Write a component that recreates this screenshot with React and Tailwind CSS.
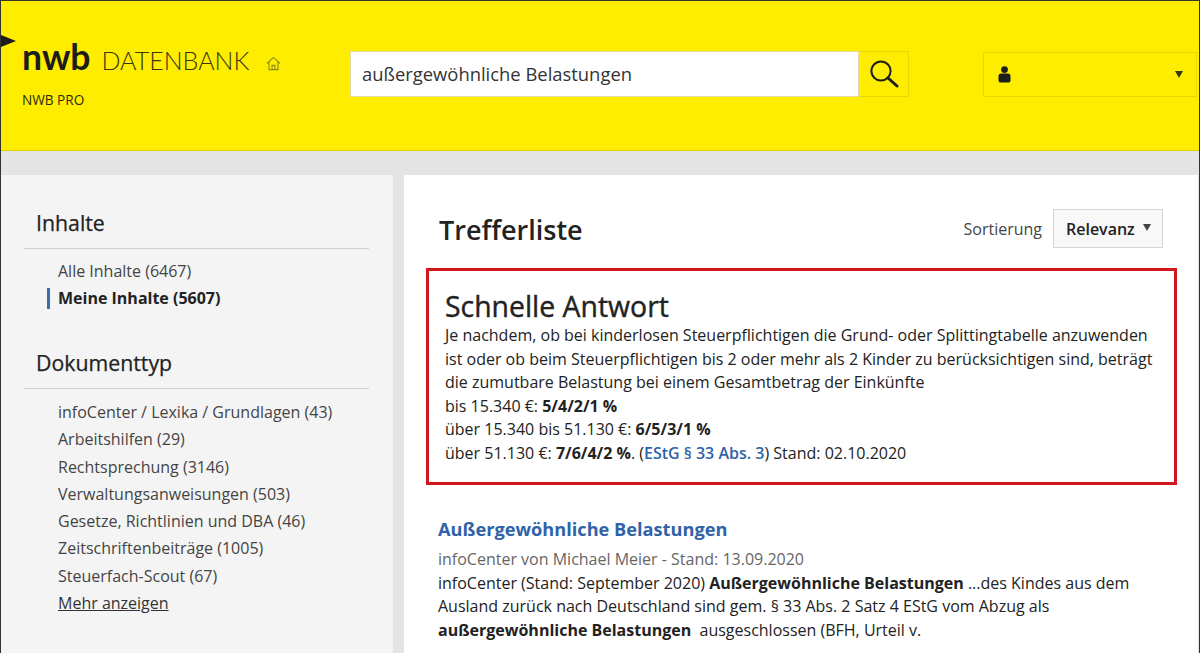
import React from 'react';

const inhalte = [
  { label: 'Alle Inhalte (6467)' },
  { label: 'Meine Inhalte (5607)', active: true },
];

const dokumenttypen = [
  'infoCenter / Lexika / Grundlagen (43)',
  'Arbeitshilfen (29)',
  'Rechtsprechung (3146)',
  'Verwaltungsanweisungen (503)',
  'Gesetze, Richtlinien und DBA (46)',
  'Zeitschriftenbeiträge (1005)',
  'Steuerfach-Scout (67)',
];

const HomeIcon = () => (
  <svg width="15" height="15" viewBox="0 0 16 16" fill="none" stroke="#8f8a10" strokeWidth="1.2">
    <path d="M1 8 L8 1.5 L15 8" />
    <path d="M3.2 6.5 V14.5 H12.8 V6.5" />
    <path d="M6.5 14.5 V10 H9.5 V14.5" />
  </svg>
);

const SearchIcon = () => (
  <svg width="30" height="30" viewBox="0 0 30 30" fill="none" stroke="#1d1d1b">
    <circle cx="12" cy="12" r="9.6" strokeWidth="2" />
    <path d="M19 19 L28 27" strokeWidth="3" strokeLinecap="round" />
  </svg>
);

const UserIcon = () => (
  <svg width="13" height="17" viewBox="0 0 13 17" fill="#1d1d1b">
    <circle cx="6.5" cy="3.6" r="3.4" />
    <path d="M0.5 10 Q0.5 7.5 3 7.5 H10 Q12.5 7.5 12.5 10 V14.5 Q12.5 16.5 10.5 16.5 H2.5 Q0.5 16.5 0.5 14.5 Z" />
  </svg>
);

const Header = () => (
  <header className="relative h-[150px] shrink-0 bg-[#ffed00] border-b border-[#e3d400] flex items-start">
    {/* kleiner Pfeil am linken Rand */}
    <div className="absolute left-0 top-[34px] w-0 h-0 border-y-[6px] border-y-transparent border-l-[15px] border-l-[#1d1d1b]" />
    <div className="w-[349px] pl-[21px] pt-[38px] shrink-0">
      <div className="flex items-baseline h-[36px]">
        <span className="text-[35.5px] leading-[36px] font-bold text-[#1d1d1b] font-['Lato',sans-serif]">nwb</span>
        <span className="ml-[11px] text-[25px] leading-[36px] font-light text-[#3a3710] font-['Lato',sans-serif]">DATENBANK</span>
        <span className="ml-[17px] self-center mt-[13px]"><HomeIcon /></span>
      </div>
      <div className="mt-[16px] text-[13.6px] leading-[18px] text-[#2b2a10]">NWB PRO</div>
    </div>
    <div className="flex mt-[50px] h-[46px]">
      <div className="w-[509px] bg-white border border-[#e0d9a0] pl-[11px] flex items-center text-[18.4px] text-[#333]">
        außergewöhnliche Belastungen
      </div>
      <div className="w-[50px] border border-l-0 border-[#e8d800] flex items-center justify-center">
        <SearchIcon />
      </div>
    </div>
    <div className="ml-[74px] mt-[51px] w-[214px] h-[45px] border border-[#e8d800] flex items-center justify-between pl-[14px] pr-[13px]">
      <UserIcon />
      <span className="w-0 h-0 border-x-[4px] border-x-transparent border-t-[7px] border-t-[#3a3710]" />
    </div>
  </header>
);

const SideSection = ({ title, children }) => (
  <section>
    <h2 className="text-[21.3px] leading-[28px] text-[#222] px-[12px] pb-[11px] border-b border-[#d0d0d0] font-normal [-webkit-text-stroke:0.25px_#222]">{title}</h2>
    <ul className="pt-[9px] pl-[34px]">{children}</ul>
  </section>
);

const Sidebar = () => (
  <aside className="w-[392px] shrink-0 bg-[#f4f4f4] pt-[34px] pl-[23px] pr-[24px]">
    <SideSection title="Inhalte">
      {inhalte.map((item) => (
        <li key={item.label} className={`relative text-[16px] leading-[27px] ${item.active ? 'font-bold text-[#222]' : 'text-[#444]'}`}>
          {item.active && <span className="absolute left-[-11px] top-[3px] w-[3px] h-[21px] bg-[#3a6ea8]" />}
          {item.label}
        </li>
      ))}
    </SideSection>
    <div className="h-[37px]" />
    <SideSection title="Dokumenttyp">
      <li className="h-px list-none" />
      {dokumenttypen.map((label) => (
        <li key={label} className="text-[16px] leading-[27.3px] text-[#444]">{label}</li>
      ))}
      <li className="text-[16px] leading-[27px] text-[#333] underline">Mehr anzeigen</li>
    </SideSection>
  </aside>
);

const Main = () => (
  <main className="flex-1 bg-white pl-[22px] pr-[21px] pt-[34px] min-w-0">
    <div className="flex items-center justify-between h-[42px] pl-[13px] pr-[14px]">
      <h1 className="text-[27px] leading-[42px] font-semibold text-[#222]">Trefferliste</h1>
      <div className="flex items-center mb-[3px]">
        <span className="text-[16px] text-[#444] mr-[11px] mt-[1px]">Sortierung</span>
        <div className="w-[110px] h-[39px] bg-[#f8f8f8] border border-[#d5d5d5] flex items-center pl-[12px] text-[16px] font-semibold text-[#222]">
          Relevanz
          <span className="ml-[8px] mb-[3px] w-0 h-0 border-x-[4px] border-x-transparent border-t-[7px] border-t-[#444]" />
        </div>
      </div>
    </div>
    <div className="mt-[17px] border-[3px] border-[#d2161e] h-[217px] pl-[16px] pt-[17px] pr-[8px]">
      <h2 className="text-[28.4px] leading-[36px] font-normal text-[#222] [-webkit-text-stroke:0.4px_#222]">Schnelle Antwort</h2>
      <div className="text-[16px] leading-[23.6px] text-[#222]">
        <p>Je nachdem, ob bei kinderlosen Steuerpflichtigen die Grund- oder Splittingtabelle anzuwenden</p>
        <p>ist oder ob beim Steuerpflichtigen bis 2 oder mehr als 2 Kinder zu berücksichtigen sind, beträgt</p>
        <p>die zumutbare Belastung bei einem Gesamtbetrag der Einkünfte</p>
        <p>bis 15.340 €: <b>5/4/2/1 %</b></p>
        <p>über 15.340 bis 51.130 €: <b>6/5/3/1 %</b></p>
        <p>über 51.130 €: <b>7/6/4/2 %</b>. (<span className="text-[#2f62a8] font-semibold">EStG § 33 Abs. 3</span>) Stand: 02.10.2020</p>
      </div>
    </div>
    <div className="mt-[30px] pl-[12px]">
      <h3 className="text-[18.2px] leading-[28px] font-bold text-[#2f62a8]">Außergewöhnliche Belastungen</h3>
      <p className="mt-[5px] text-[16px] leading-[23.5px] text-[#666]">infoCenter von Michael Meier - Stand: 13.09.2020</p>
      <div className="text-[16px] leading-[23.5px] text-[#222]">
        <p>infoCenter (Stand: September 2020) <b>Außergewöhnliche Belastungen</b> ...des Kindes aus dem</p>
        <p>Ausland zurück nach Deutschland sind gem. § 33 Abs. 2 Satz 4 EStG vom Abzug als</p>
        <p><b>außergewöhnliche Belastungen</b>&nbsp; ausgeschlossen (BFH, Urteil v.</p>
      </div>
    </div>
  </main>
);

const App = () => (
  <div className="h-[653px] w-[1200px] overflow-hidden flex flex-col bg-[#e4e4e4] border-x border-t border-[#333] font-['Open_Sans',sans-serif]">
    <Header />
    <div className="flex gap-[11px] mt-[24px] flex-1 min-h-0 pr-[1px]">
      <Sidebar />
      <Main />
    </div>
  </div>
);

export default App;
